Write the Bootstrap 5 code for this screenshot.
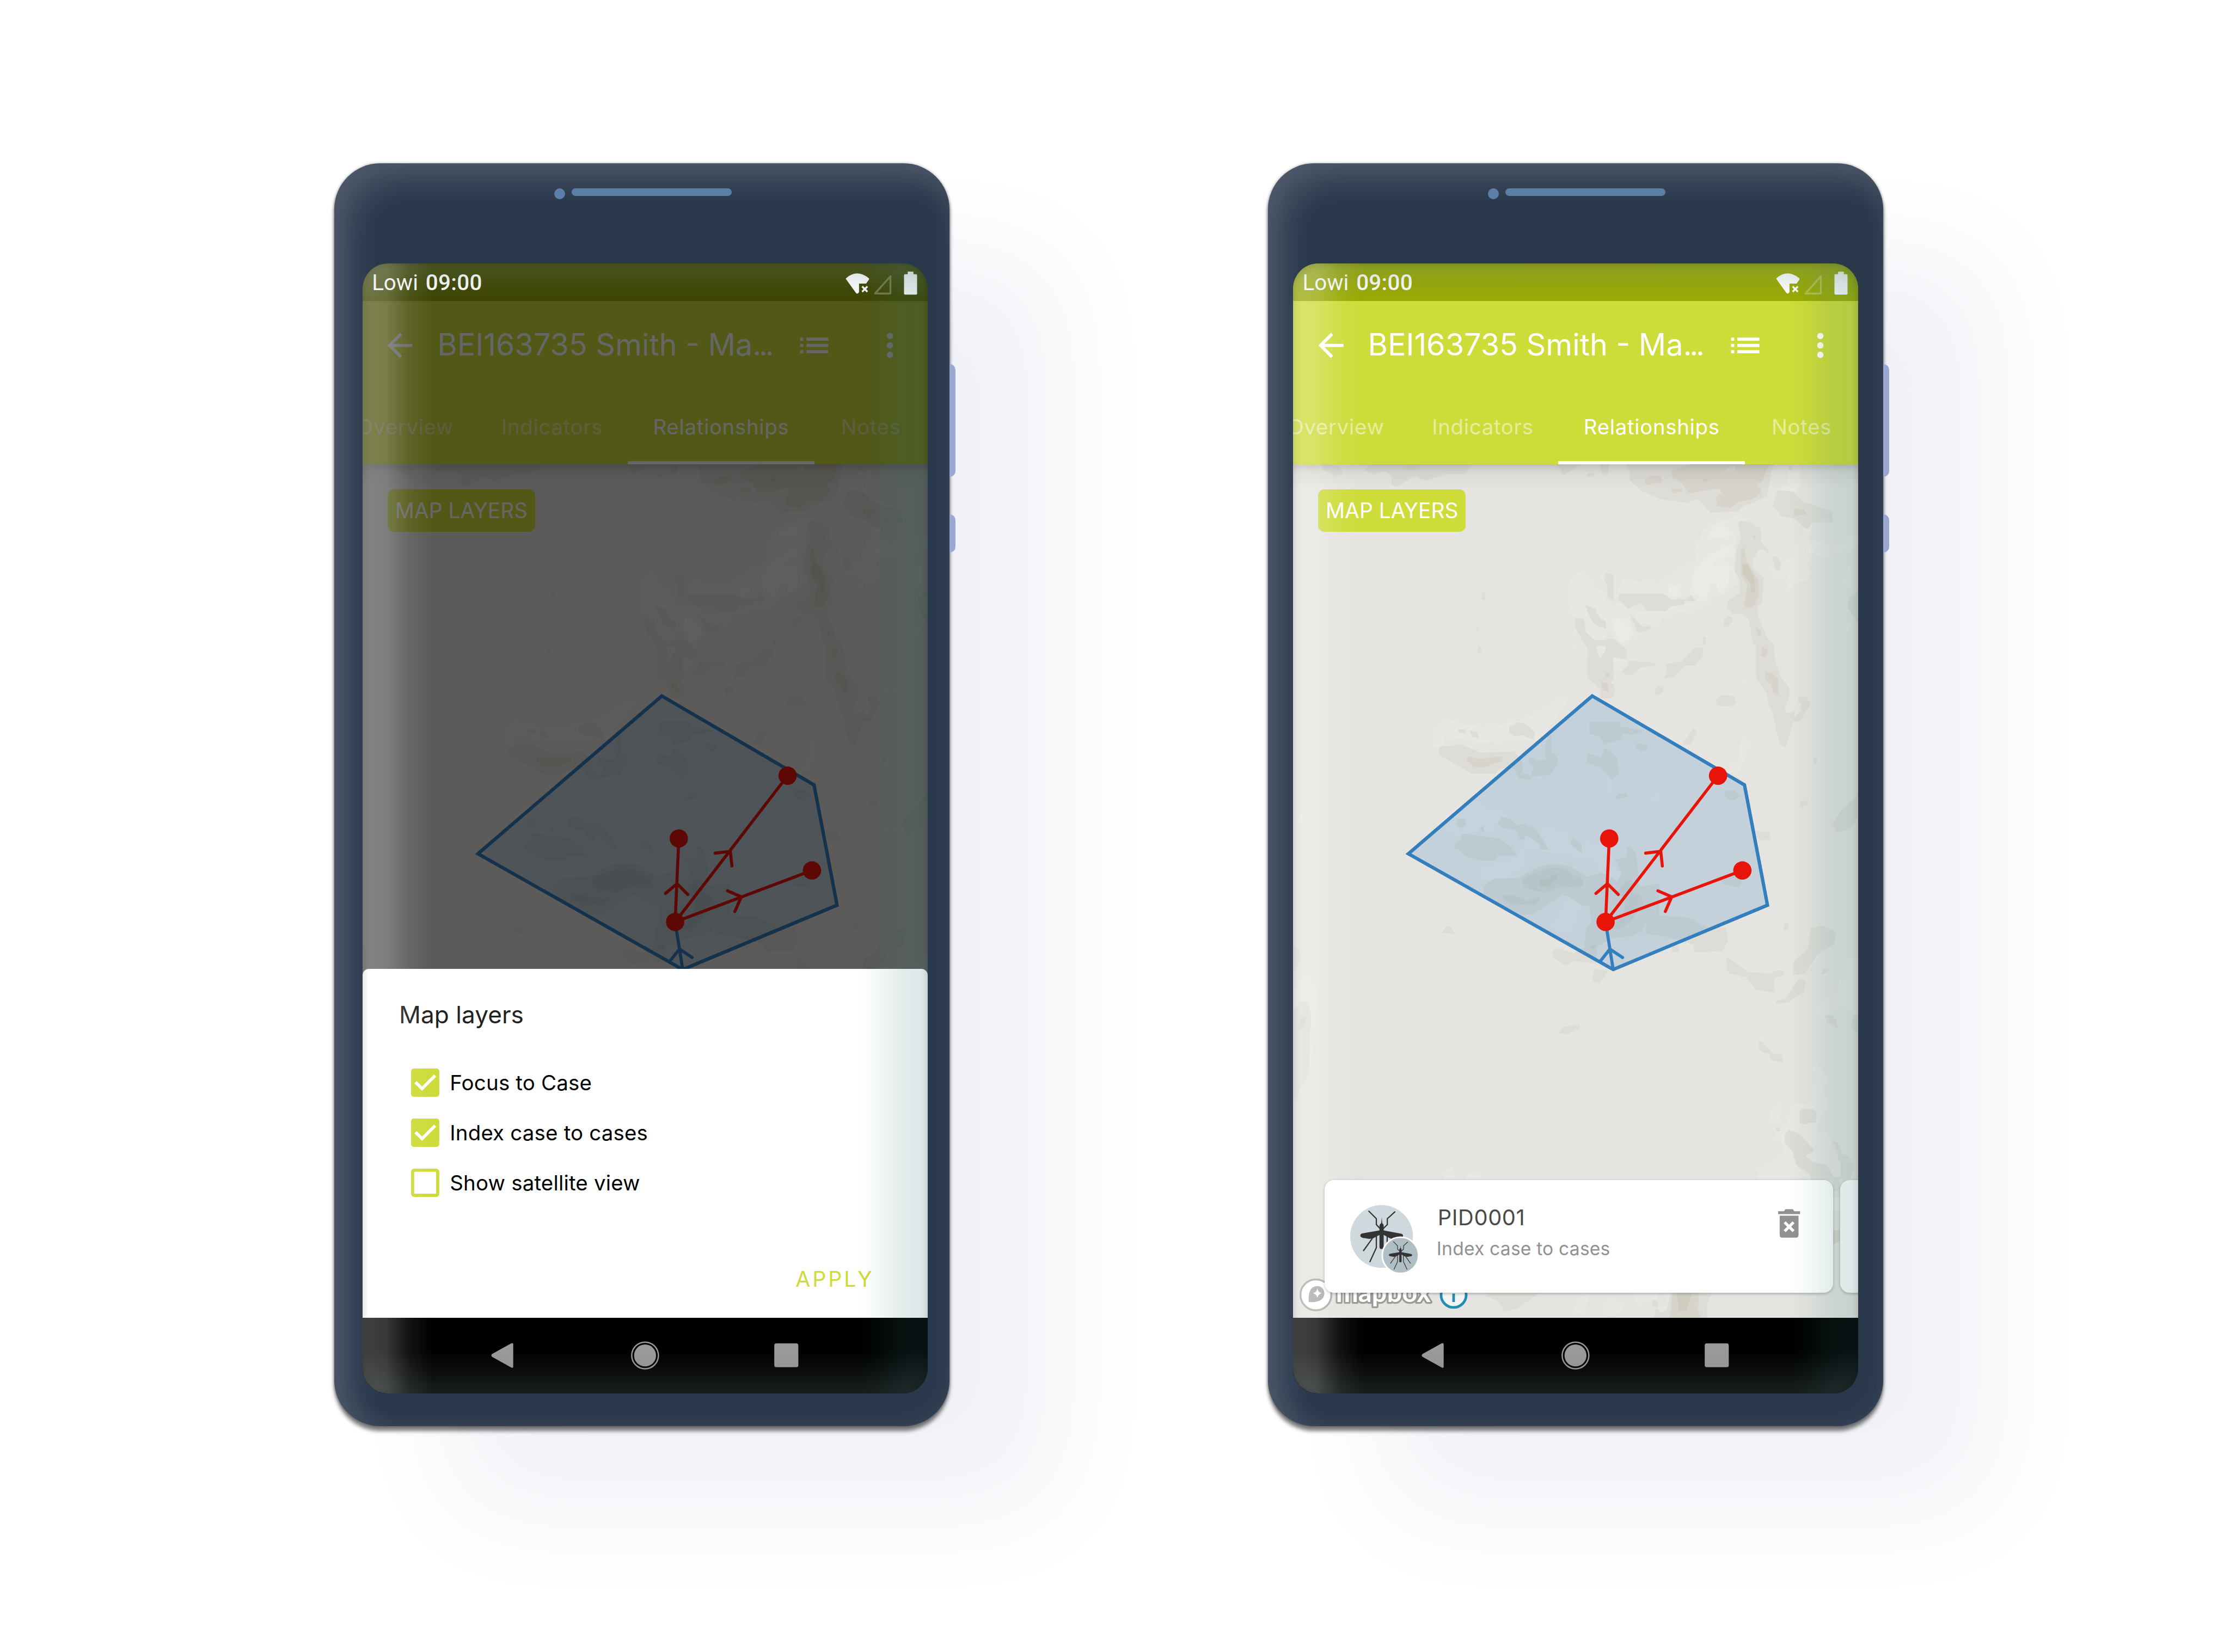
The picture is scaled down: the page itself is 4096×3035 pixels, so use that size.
<!DOCTYPE html>
<html lang="en">
<head>
<meta charset="utf-8">
<title>Relationships map</title>
<meta name="viewport" content="width=device-width, initial-scale=1">
<link href="https://cdn.jsdelivr.net/npm/bootstrap@5.3.0/dist/css/bootstrap.min.css" rel="stylesheet">
<style>
/* 1rem = 10 design pixels */
html{font-size:9.6083px}
body{font-family:Inter,Roboto,"Liberation Sans",sans-serif;background:#fff;overflow:hidden;line-height:1;color:#000}
.stage{height:303.5rem;width:426.3rem;padding:31.2rem 0 0 63.9rem;gap:60.9rem}
.phone{width:117.6rem;height:241.5rem;border-radius:8.8rem;background:#2a384c;
  box-shadow:inset 3.4rem 3.4rem 6rem rgba(255,255,255,.14),inset 0 0 6rem rgba(255,255,255,.06),0 .9rem .8rem rgba(0,0,0,.5),0 0 .5rem rgba(0,0,0,.35),21.5rem 17rem 21rem -1rem #f1f2f7;flex:none}
.phone::before,.phone::after{content:"";position:absolute;left:117.6rem;width:1.2rem;background:#9aa7d0;border-radius:0 1.1rem 1.1rem 0}
.phone::before{top:38.4rem;height:21.6rem}
.phone::after{top:67.2rem;height:7.2rem}
.earpiece{height:19.2rem;padding:4.8rem 0 0 42rem;gap:1.25rem}
.lens{width:2.1rem;height:2.1rem;background:#5b7fa8}
.slot{width:30.6rem;height:1.5rem;border-radius:.75rem;background:#5b7fa8}
.screen{width:108rem;height:216rem;border-radius:4.8rem;margin-left:4.8rem}
.phone-a .screen{margin-left:5.4rem}
.status{height:7.2rem;background:#9a0;padding:.3rem 1.8rem 0 1.8rem;color:#fff;font-family:Roboto,"Liberation Sans",sans-serif;font-size:4.2rem;z-index:3;flex:none}
.phone-a .status{background:#3d4400}
.clock{margin-left:.4rem;letter-spacing:.03rem}
.signals{width:14.2rem;height:4.8rem}
.appbar{background:#cddc39;color:#fff;height:31.2rem;flex:none;z-index:1}
.appbar::after{content:"";position:absolute;left:0;right:0;top:31.2rem;height:4.5rem;background:linear-gradient(rgba(0,0,0,.16),rgba(0,0,0,.05) 35%,transparent)}
.toolbar{height:16.8rem;padding:0 3.6rem}
.ico{width:7.2rem;height:7.2rem;flex:none;fill:currentColor}
.doc-title{font-size:5.8rem;width:68.5rem;margin:0 0 .2rem 3.5rem;white-space:nowrap}
.dots{letter-spacing:-.45rem}
.tabs{height:14.4rem;font-size:4rem;letter-spacing:.07rem;margin-left:-5.4rem;width:125rem}
.tabs .tab{color:rgba(255,255,255,.5);height:14.4rem;flex:none}
.tab-a{width:27.2rem}.tab-b{width:28.9rem}.tab-c{width:35.7rem}.tab-d{width:21.6rem}
.tabs .tab.on{color:#fff;box-shadow:inset 0 -.6rem #fff}
.layers{background:#cddc39;color:#fff;width:28.2rem;height:8.1rem;border-radius:1.2rem;margin:4.8rem;font-size:4.05rem}
.map{background:#e5e4e0;min-height:0}
.map>svg.terrain{position:absolute;left:0;top:0;width:108rem;height:163.2rem}
.deck{position:absolute;left:6.05rem;bottom:4.8rem;gap:1.3rem}
.case{width:97.2rem;height:21.6rem;border-radius:1.8rem;background:#fff;flex:none;box-shadow:0 .2rem .6rem rgba(0,0,0,.25)}
.avatar{width:13.5rem;height:13rem;margin:4.8rem 0 0 4.9rem;flex:none}
.case-text{margin:4.3rem 0 0 3rem}
.case-name{font-size:4.15rem;letter-spacing:.06rem;line-height:5.9rem;padding-left:.2rem;color:#4a4a4a}
.case-kind{font-size:3.5rem;letter-spacing:.02rem;line-height:5.9rem;color:#919191}
.bin{width:4.2rem;height:5.6rem;margin:5.6rem 6.3rem 0 auto}
.brand{position:absolute;left:0;bottom:0;width:40rem;height:8rem}
.sheet{position:absolute;left:0;right:0;bottom:14.4rem;height:66.7rem;background:#fff;border-radius:1.2rem 1.2rem 0 0;z-index:3}
.scrim{position:absolute;inset:7.2rem 0 14.4rem 0;background:rgba(0,0,0,.6);z-index:2}
.sheet-title{font-size:4.6rem;line-height:6rem;color:#212121;padding:5.8rem 0 0 7rem}
.opts{padding:7.2rem 0 0 9.3rem;gap:4.2rem;font-size:4rem;letter-spacing:.02rem}
.opts label{gap:2rem;height:5.4rem}
.box{width:5.4rem;height:5.4rem}
.apply{position:absolute;right:10.2rem;bottom:4.3rem;font-size:4.1rem;letter-spacing:.4rem;line-height:6rem;color:#cddc39}
.softkeys{height:14.4rem;background:#000;flex:none}
.softkeys svg{width:108rem;height:14.4rem}
.sheen{position:absolute;inset:0;z-index:5;pointer-events:none;border-radius:4.8rem;
 box-shadow:inset 0 0 1.6rem rgba(0,0,0,.2);
 background:
  linear-gradient(90deg,rgba(255,255,255,.26) 0,rgba(255,255,255,.22) 4.5rem,rgba(255,255,255,.07) 9rem,transparent 13.5rem),
  linear-gradient(270deg,rgba(59,118,118,.17) 0,rgba(59,118,118,.14) 5rem,rgba(59,118,118,.05) 9.5rem,transparent 13rem),
  linear-gradient(180deg,rgba(110,130,130,.28) 0,rgba(110,130,130,.12) 3.6rem,transparent 7rem),
  linear-gradient(0deg,rgba(110,130,130,.24) 0,rgba(110,130,130,.14) 3rem,transparent 8rem)}
</style>
</head>
<body>
<svg width="0" height="0" class="position-absolute">
 <symbol id="land" viewBox="0 384 1080 1632" preserveAspectRatio="none">
  <g fill="#e8e7e3" transform="translate(-72 396) scale(.8292 .6378)">
   <path d="M722 340L740 308 755 300 770 320 775 345 800 360 812 400 835 440 800 520 770 510 740 480 735 600 718 690 690 750 650 805 530 810 438 795 430 830 410 828 412 770 440 745 510 770 580 765 640 735 690 690 718 690 735 600 735 440 722 400z"/>
   <path d="M1120 805L1135 808 1132 850 1115 900 1085 910 1115 860zM105 1520L122 1498 135 1530 143 1568 138 1660 130 1790 105 1860 92 1900 88 1560zM107 1015L112 1025 108 1055 103 1050z"/>
  </g>
  <g fill="#dddcd7" transform="translate(-72 -224) scale(.8292 .4847)">
   <path d="M150 1254H165L195 1262 203 1293 185 1299 155 1272zM262 1254H502L480 1293H438L392 1320 366 1300 328 1343 314 1335V1300L300 1280 275 1292 253 1280zM692 1254H745L740 1268 710 1298 702 1270zM762 1304L770 1287 782 1290 780 1301z"/>
   <path fill="#d9d8d2" d="M348 1254H380L365 1275 348 1280z"/>
  </g>
  <g fill="#dddcd7" transform="translate(-72 396) scale(.8292 .6378)">
   <path d="M760 402L785 415 808 445V475L780 460 768 430zM737 440L758 445 762 485 785 510 825 505 855 535V565L825 560V640L830 660 823 682H797L795 655 765 620 766 535 737 470zM522 366H530V387H522zM514 525L522 530 520 548 512 550zM508 470L514 475 512 485z"/>
   <path fill="#d8d6cf" d="M797 628L812 640 815 665 800 655z"/>
   <path fill="#e8e7e3" d="M787 527H807L805 545 795 563z"/>
   <path d="M985 820L1010 772 1018 785 1003 822zM1198 735L1245 720 1238 765 1222 830 1210 820 1200 780zM1285 855L1297 868 1293 880 1286 875zM1330 1060L1350 1020 1389 970V1040L1370 1075 1340 1085zM1155 1080L1185 1085 1188 1105 1165 1110 1155 1100zM1080 960H1105L1120 975 1100 990 1085 980zM1255 990H1275L1270 1005 1255 1010zM1280 1370L1310 1365 1338 1385 1335 1420 1300 1445 1265 1510H1240L1245 1470 1275 1430zM1220 1358H1230L1228 1378 1218 1378zM430 1385L440 1366 452 1370 458 1388z"/>
   <path d="M900 1330L1000 1340 1040 1370H1085L1090 1410 1078 1440 1012 1445 1010 1420 940 1395 900 1390zM960 1420L978 1425 976 1445 960 1442zM1070 1225L1130 1205 1115 1250 1080 1240zM88 1430L102 1440 103 1470 88 1500z"/>
  </g>
  <g transform="translate(580 376) scale(.33333)">
   <g fill="#e8e7e3">
    <path d="M780 320L865 338 810 360 822 430 795 440 800 520 785 600 812 715 780 720 755 755 660 795 600 850 385 892 340 975 320 940H250L215 890 210 850 180 850 140 820 100 828 65 800 80 835 70 875H20L0 840V950L60 975 60 930 100 1020 170 1075 185 1040 230 1000 265 995 210 985 190 880 300 865 420 840 570 815 545 775 430 800 380 765H150L120 745 160 682H200L220 698 360 708 400 662H432L462 615 560 598 580 570 565 520 610 402 715 348 780 336z"/>
    <path d="M1098 35L1130 75 1172 45 1165 160 1145 190 1125 180 1050 168 1098 145zM1240 358L1220 465 1400 495 1450 432H1500V490L1450 510 1410 530 1240 545 1200 600 1228 640 1215 690 1150 705 1115 735H1090L1108 690 1098 662H1025L1005 640V590L1025 625 1060 635 1070 575 1118 560 1135 490 1180 445V390zM1455 600L1468 715 1410 725 1405 690zM1440 950L1468 955 1425 1000zM95 1128L165 1155 105 1215zM90 1260L100 1280 85 1285zM850 1280L858 1255 866 1280zM20 690L28 655 45 690z"/>
   </g>
   <path fill="#ebeae6" d="M645 415L690 395 712 368 765 400V430L725 448 645 440zM740 493H765V545L672 590V605H765L755 725 700 762 685 708H655L635 780 600 800 585 768 562 765 545 670 620 570zM415 735L445 718 480 728V765L445 782 415 770zM108 903L165 920 212 985 185 1025 137 1050 103 970zM1215 497L1245 510 1230 533 1200 530z"/>
   <g fill="#dddcd7">
    <path d="M175 24L190 60 193 118 255 175 380 228 535 245 553 228H590L655 302 812 293 840 265 978 210 1005 60 1022 24zM18 24H72L65 78 38 87zM1098 33H1125V60H1108zM1042 174L1127 182 1180 236 1348 292 1356 356H1238L1218 392H1198L1135 338 1053 320V302L1008 265zM1008 550L1042 560 1060 598 1050 635 1025 625zM130 768L148 765H380L432 800H515L543 773 570 808H508L500 828 425 838 397 866H295L248 820 183 855 130 803zM45 690L55 645 98 660V805L63 783V715zM193 887L267 957 303 948 312 967 240 993zM0 875L25 910 55 923V967L0 950zM610 1014H627V1058H610zM563 1077H610V1122L563 1179H508L443 1243 387 1253 405 1208 397 1171 490 1152zM183 1152L333 1161 340 1177 332 1182 257 1188 203 1235H167L148 1208 183 1180zM350 1299H378L387 1327 340 1356 332 1318zM722 1347L785 1356 802 1391 780 1410H692L684 1375zM757 893L783 905V922L748 957 729 950V920zM1450 785L1500 750V930L1440 845z"/>
    <path d="M0 1038L40 1040 82 1022 110 1068 174 1086V1140L130 1125H98L92 1145 98 1255 75 1262 108 1318 92 1364H25L20 1310 0 1300z"/>
    <path d="M812 358L830 347 885 357 942 395V470L987 515V540L960 513H933L895 570 903 625 960 670 950 818 924 845V887L980 1022 1016 1058 1024 1150 1060 1245 1107 1308V1363L1080 1418 1090 1467 1125 1485 1172 1438V1400L1155 1382 1162 1356H1202L1227 1400 1168 1500H1017V1460L988 1410 978 1345 915 1245V1068L895 1048 877 920 850 885H785L748 847 756 802 822 765V683L792 642 803 513 830 450z"/>
   </g>
   <path fill="#e8e7e3" d="M0 1068H55L48 1100 18 1140z"/>
   <path fill="#d7d4cb" d="M433 60L535 24H1000L978 50 950 125 925 135V152H942V190L895 227 820 238 767 274 692 265 684 218 720 190 702 163 525 190 488 125 433 98zM310 90H368L376 125 285 144 276 118zM433 162H490V180L433 191zM1135 275L1190 283 1208 310 1145 320 1127 310zM830 504H848L860 575 933 700V783L897 846H858L849 825 866 717 830 662zM895 432H912L905 460zM915 960L942 977V1014L922 1003zM950 1070L987 1087 970 1132 942 1122zM968 1218H1007L1043 1255V1347L1015 1337 998 1282 968 1263zM27 1272L62 1282 72 1335 35 1318zM55 1218L80 1235 55 1245z"/>
   <path fill="#dddcd7" d="M732 68L767 33H792V62z"/>
   <path fill="#cfccc0" d="M840 597H868L905 673 912 762 885 753V708L840 655zM617 98L642 117 610 125z"/>
  </g>
  <g transform="translate(200 876) scale(.33333)">
   <path fill="#e8e7e3" d="M320 25L470 15 480 38H545L640 0H850L870 100 780 110 640 105 480 122 380 100 265 80 250 150 205 130V40L260 0zM270 610L275 550 320 500 460 445 510 505 600 510 685 555 580 545 560 615 500 655 470 610 400 650 350 670zM800 625L860 597 995 655 960 700 1070 690 1230 700 1240 840 1285 870 1260 915 1170 865 1130 795 1050 780 900 752 725 740 720 830 620 900 515 915 465 880 475 830 690 785 735 650 800 680 850 735zM1185 310L1250 350 1195 425zM1115 935L1165 945 1155 1020 1105 1010zM1500 410L1450 430 1435 475 1500 455zM845 1240L850 1215 875 1250z"/>
   <path fill="#dddcd7" d="M640 30L690 2 740 15 787 60 780 103 715 78 670 85 640 65zM350 42L390 48V68L345 60zM412 50L455 60 465 95 430 88zM240 143L370 132 475 180 668 172 690 200 715 230 680 270H590L557 300H428L235 188zM860 80L880 75V170L918 210V245L870 307 780 315 760 335 695 325 668 270 712 230 720 295 765 310 778 260 750 235V207H785L795 225 852 215 843 150zM1101 0H1270L1280 30 1415 50 1350 75 1293 70 1275 105 1185 132 1157 85 1101 70zM1185 152L1225 170 1260 210 1267 300 1232 335 1160 262 1083 235 1092 180 1167 207zM1370 123L1433 138V160L1398 170 1362 148zM1270 412L1310 410 1322 430 1258 447 1250 430zM597 547L650 558 677 594 730 585 788 615 835 680 865 735H815L810 700 735 650 725 678H703L672 620 593 610 575 582zM370 642L575 668 655 720 687 770H575L557 797H460L388 768 325 722 335 690 360 685zM1005 668L1055 700V753L990 705zM343 555L390 560V595L360 613 337 595zM470 612L490 597 500 645zM273 1176H307L324 1214H260zM888 1315L927 1298 1010 1332 1040 1300H1140V1388L1010 1375 962 1397 888 1350zM1128 1418L1210 1428 1158 1500 1120 1490z"/>
   <path fill="#dddcd7" d="M548 900L690 898 785 843 870 816 980 825 1090 890 1165 865 1260 915 1287 870 1247 790 1315 775V722H1340L1370 765 1385 945 1500 930V1175L1440 1130 1395 1205 1340 1232 1220 1242 1150 1290 1090 1330 1070 1300 1080 1190 1110 1155 1100 1058 1060 1055 990 1010 945 993 780 1103 720 1110 600 1060 493 990V945z"/>
   <path fill="#d6d4ce" d="M750 880L880 837 970 843 990 870 1055 900 1065 935 1040 955 935 945 850 982 745 960 715 935V910zM603 993H670L740 1030 815 1003V1025L780 1057 745 1045 670 1055 603 1018zM1310 910H1350V980L1390 995 1410 1030 1350 1130 1270 1195 1220 1190 1300 1090 1305 1020 1260 980zM1110 1290L1135 1278V1300L1105 1305z"/>
   <path fill="#d7d4cb" d="M398 198L465 215 595 198 602 225 500 262H443L398 225z"/>
   <path fill="#cdcfbe" d="M895 873H918V890L870 944H807L815 912 870 898z"/>
   <path fill="#e8e7e3" d="M980 1010L880 1175 900 1190 980 1225 1010 1180 1035 1080 1075 1070z"/>
  </g>
  <g transform="translate(600 1326) scale(.33333 .44643)">
   <path fill="#e8e7e3" d="M1400 0L1360 80 1320 110V150L1205 210V250L1250 270V245L1290 240 1350 213 1390 220 1440 260V0zM745 85L768 92 755 110 743 105zM873 355L880 335 900 362zM1185 457L1230 470 1260 525 1243 560 1262 650 1240 670 1200 720 1205 750 1240 748 1288 785 1285 810 1340 880V940L1305 945 1260 890 1180 878 1140 850 1185 830 1100 755 1045 740 1020 760 1065 835 1085 890 1150 935 1080 954H866L872 912 895 898 930 895 960 865 1000 855 1010 830V805L975 785 965 750 1020 720 1045 695 1055 645 1075 628H1165V570L1215 515 1210 498 1185 490zM985 625L1002 640 990 705 947 712 937 665zM0 1470L95 1485V1510L40 1535 0 1540zM145 1438H290V1465L170 1485zM290 1500L345 1490V1438H375L345 1510 315 1522zM1296 1030H1335V1085H1296z"/>
   <path fill="#dddcd7" d="M687 0L815 65 945 72 965 58H1012L1020 75 958 92 963 153 853 140 798 85 705 72 687 55zM1100 0H1180L1140 55 1110 77H1085L1067 50 1075 15zM1240 52H1270L1268 65 1224 77zM1103 92L1140 105 1130 148 1042 194 972 202 965 188 1020 180zM1250 250H1288L1318 270 1323 305 1260 280zM1418 250H1440V325L1418 318 1400 290zM873 361H890L955 416H1002L1010 450 947 444 928 415 890 408 873 395zM1105 660L1120 651H1180L1200 665V710H1160L1140 718 1104 712zM1020 760L1045 740 1100 755 1185 822V835L1140 850 1180 878 1260 890 1305 945 1340 940V880L1326 870V838L1290 783 1325 795 1350 843 1382 852 1417 892 1400 945 1370 954H1335V1000H1296V954H1175L1160 927 1085 890 1065 835 1020 795zM965 727L993 733V748H975zM262 1472H291V1500L262 1495zM365 1438H603L575 1480V1546H268L280 1507 318 1522 345 1510z"/>
   <path fill="#d7d4cb" d="M378 1438H529L522 1515 540 1546H360zM1296 1170H1335V1218L1296 1232z"/>
   <path fill="#cfccc0" d="M402 1438H487L456 1513 411 1521z"/>
  </g>
  <g transform="translate(-72 1296) scale(.8292 .6378)">
   <path fill="#e0dfda" d="M88 210L105 178 122 185 128 220 124 395 105 440 88 500z"/><path fill="#d9d8d0" d="M98 268L105 228 117 230 115 255z"/>
   <path fill="#dddcd7" d="M88 10L102 35V65L88 75zM700 275L708 257 748 250 749 260 717 280zM530 1062L535 1054H655L640 1068 605 1100 575 1111 560 1080zM780 85H812L792 125 778 120zM795 205H800L797 213z"/>
   <path fill="#e8e7e3" d="M433 715L440 685 455 676 462 715zM484 715L488 695 515 692 530 715zM745 1075L770 1054 760 1110 732 1115z"/>
  </g>
 </symbol>
 <symbol id="graph" viewBox="0 384 1080 1632">
  <path d="M572 827L863 997 907 1227 612 1350 220.500 1128.700z" fill="#337ebd" fill-opacity=".19" stroke="#337ebd" stroke-width="6.500"/>
  <g fill="none" stroke-width="6" stroke-linecap="round" stroke="#337ebd"><path d="M612 1350L597.500 1259M588.300 1333L605.700 1311 630 1327"/></g>
  <g fill="none" stroke-width="5.800" stroke-linecap="round" stroke="#e8140a"><path d="M597.500 1259L604.500 1099.500M597.500 1259L812.500 979.500M597.500 1259L859 1160.600M579 1204.500L601 1186 621.700 1206.500M674 1127.500L703 1124 706 1152M697.500 1199.500L724 1211 711.600 1239"/></g>
  <g fill="#e8140a"><circle cx="604.500" cy="1099.500" r="17.500"/><circle cx="597.500" cy="1259" r="17.500"/><circle cx="812.500" cy="979.500" r="17.500"/><circle cx="859" cy="1160.600" r="17.500"/></g>
 </symbol>
 <symbol id="i-back" viewBox="0 0 24 24"><path d="M20 11H7.830l5.590-5.590L12 4l-8 8 8 8 1.410-1.410L7.830 13H20v-2z"/></symbol>
 <symbol id="i-list" viewBox="0 0 24 24"><path d="M3 13h2v-2H3v2zm0 4h2v-2H3v2zm0-8h2V7H3v2zm4 4h14v-2H7v2zm0 4h14v-2H7v2zM7 7v2h14V7H7z"/></symbol>
 <symbol id="i-more" viewBox="0 0 24 24"><circle cx="12" cy="6" r="2"/><circle cx="12" cy="12" r="2"/><circle cx="12" cy="18" r="2"/></symbol>
 <symbol id="i-status" viewBox="920 12 142 48">
  <path d="M923.500 27.500Q944 8 967.500 26.500Q969 28.500 967.500 30L962.500 37H949V53.500Q945.500 59 942 53.500z" fill="#fff"/>
  <path d="M955 42.500L965 52.500M965 42.500L955 52.500" stroke="#fff" stroke-width="3.600"/>
  <path d="M1009 23V56H979.500z" fill="none" stroke="#fff" stroke-opacity=".28" stroke-width="3.600" stroke-linejoin="round"/>
  <path d="M1042 14H1053V19H1058Q1060 19 1060 21V56Q1060 58 1058 58H1037Q1035 58 1035 56V21Q1035 19 1037 19H1042z" fill="#fff"/>
 </symbol>
 <symbol id="bug" viewBox="413 218 260 306" overflow="visible">
  <g fill="none" stroke="#333" stroke-width="7"><path d="M468 224L513 269V303L535 326M621 228L576 269V303L552 326M490 382L438 454M513 368V435L475 518M598 382L650 454M575 368V435L613 518"/></g>
  <path fill="#333" d="M541 295L544 262 547 295Q556 300 555 312V336L655 355Q667 358 666 369Q664 379 640 381Q612 388 590 381L555 362V434Q554 443 543 443Q532 443 531 434V362L496 381Q474 388 450 381Q424 379 421 368Q420 356 432 353L531 336V312Q532 298 541 295z"/>
 </symbol>
 <symbol id="keys" viewBox="0 2016 1080 144">
  <g fill="#999"><path d="M288 2067V2109Q288 2113 284 2111L248 2091Q244 2088 248 2085L284 2065Q288 2063 288 2067z"/><circle cx="540" cy="2088" r="21"/><circle cx="540" cy="2088" r="25.500" fill="none" stroke="#999" stroke-width="2.600"/><rect x="787" y="2065" width="46" height="45.500" rx="4"/></g>
 </symbol>
</svg>

<main class="stage d-flex align-items-start">
 <section class="phone phone-a position-relative">
  <div class="earpiece d-flex"><i class="lens rounded-circle"></i><i class="slot"></i></div>
  <div class="screen position-relative overflow-hidden d-flex flex-column">
   <div class="status d-flex align-items-center justify-content-between position-relative"><span>Lowi <span class="fw-medium clock">09:00</span></span><svg class="signals"><use href="#i-status"/></svg></div>
   <header class="appbar position-relative">
    <div class="toolbar d-flex align-items-center"><svg class="ico"><use href="#i-back"/></svg><div class="doc-title">BEI163735 Smith - Ma<span class="dots">...</span></div><svg class="ico"><use href="#i-list"/></svg><svg class="ico ms-auto"><use href="#i-more"/></svg></div>
    <nav class="tabs d-flex">
     <span class="tab tab-a d-flex align-items-center justify-content-center">Overview</span>
     <span class="tab tab-b d-flex align-items-center justify-content-center">Indicators</span>
     <span class="tab tab-c on d-flex align-items-center justify-content-center">Relationships</span>
     <span class="tab tab-d d-flex align-items-center justify-content-center">Notes</span>
    </nav>
   </header>
   <div class="map position-relative flex-grow-1"><svg class="terrain"><use href="#land"/><use href="#graph"/></svg>
    <div class="layers position-relative d-flex align-items-center justify-content-center">MAP LAYERS</div></div>
   <div class="softkeys"><svg><use href="#keys"/></svg></div>
   <div class="scrim"></div>
   <div class="sheet">
    <div class="sheet-title">Map layers</div>
    <div class="opts d-flex flex-column">
     <label class="d-flex align-items-center"><svg class="box" viewBox="0 0 54 54"><rect width="54" height="54" rx="5" fill="#cddc39"/><path d="M8.500 26L21 38.500 46 13.500" fill="none" stroke="#fff" stroke-width="6"/></svg><span>Focus to Case</span></label>
     <label class="d-flex align-items-center"><svg class="box" viewBox="0 0 54 54"><rect width="54" height="54" rx="5" fill="#cddc39"/><path d="M8.500 26L21 38.500 46 13.500" fill="none" stroke="#fff" stroke-width="6"/></svg><span>Index case to cases</span></label>
     <label class="d-flex align-items-center"><svg class="box" viewBox="0 0 54 54"><rect x="3" y="3" width="48" height="48" rx="3" fill="none" stroke="#cddc39" stroke-width="6"/></svg><span>Show satellite view</span></label>
    </div>
    <div class="apply">APPLY</div>
   </div>
   <div class="sheen"></div>
  </div>
 </section>

 <section class="phone position-relative">
  <div class="earpiece d-flex"><i class="lens rounded-circle"></i><i class="slot"></i></div>
  <div class="screen position-relative overflow-hidden d-flex flex-column">
   <div class="status d-flex align-items-center justify-content-between position-relative"><span>Lowi <span class="fw-medium clock">09:00</span></span><svg class="signals"><use href="#i-status"/></svg></div>
   <header class="appbar position-relative">
    <div class="toolbar d-flex align-items-center"><svg class="ico"><use href="#i-back"/></svg><div class="doc-title">BEI163735 Smith - Ma<span class="dots">...</span></div><svg class="ico"><use href="#i-list"/></svg><svg class="ico ms-auto"><use href="#i-more"/></svg></div>
    <nav class="tabs d-flex">
     <span class="tab tab-a d-flex align-items-center justify-content-center">Overview</span>
     <span class="tab tab-b d-flex align-items-center justify-content-center">Indicators</span>
     <span class="tab tab-c on d-flex align-items-center justify-content-center">Relationships</span>
     <span class="tab tab-d d-flex align-items-center justify-content-center">Notes</span>
    </nav>
   </header>
   <div class="map position-relative flex-grow-1"><svg class="terrain"><use href="#land"/><use href="#graph"/></svg>
    <div class="layers position-relative d-flex align-items-center justify-content-center">MAP LAYERS</div>
    <svg class="brand" viewBox="0 1936 400 80">
     <circle cx="43.700" cy="1972.300" r="29.500" fill="#fff" stroke="#aaa9a7" stroke-width="3.600"/>
     <path d="M30 1986Q28 1956 46 1955.500Q59 1956 60 1970Q58 1988 30 1986z" fill="#aaa9a7"/><path d="M46.500 1960Q48 1968 55 1969Q48 1971 46.500 1978Q45 1971 38 1969Q45 1968 46.500 1960z" fill="#fff"/>
     <text x="82" y="1985.500" font-family="Lato" font-weight="700" font-size="52" textLength="181" lengthAdjust="spacingAndGlyphs" fill="#fff" stroke="#9b9a97" stroke-width="7" stroke-linejoin="round" paint-order="stroke">mapbox</text>
     <circle cx="307" cy="1972.300" r="24" fill="#f2f4f3" stroke="#1f8eaf" stroke-width="5"/><rect x="304.500" y="1970" width="5" height="16" fill="#1f8eaf"/>
    </svg>
    <div class="deck d-flex">
     <article class="case d-flex">
      <svg class="avatar" viewBox="363 191 405 390"><circle cx="543" cy="371" r="180" fill="#cfd8dd"/><use href="#bug" x="413" y="218" width="260" height="306"/><circle cx="651" cy="479" r="104" fill="#b0bec5" stroke="#fff" stroke-width="9"/><use href="#bug" x="578.500" y="396.500" width="145" height="167"/></svg>
      <div class="case-text"><div class="case-name">PID0001</div><div class="case-kind">Index case to cases</div></div>
      <svg class="bin" viewBox="927 1808 42 56"><path fill="#919191" d="M927 1812.300H938L941 1808.500H955L958 1812.300H969V1818H927zM930 1821H966V1858Q966 1863 961 1863H935Q930 1863 930 1858z"/><path d="M939.500 1833.500L956.500 1850.500M956.500 1833.500L939.500 1850.500" stroke="#fff" stroke-width="5.500"/></svg>
     </article>
     <article class="case"></article>
    </div>
   </div>
   <div class="softkeys"><svg><use href="#keys"/></svg></div>
   <div class="sheen"></div>
  </div>
 </section>
</main>
<script src="https://cdn.jsdelivr.net/npm/bootstrap@5.3.0/dist/js/bootstrap.bundle.min.js"></script>
</body>
</html>
